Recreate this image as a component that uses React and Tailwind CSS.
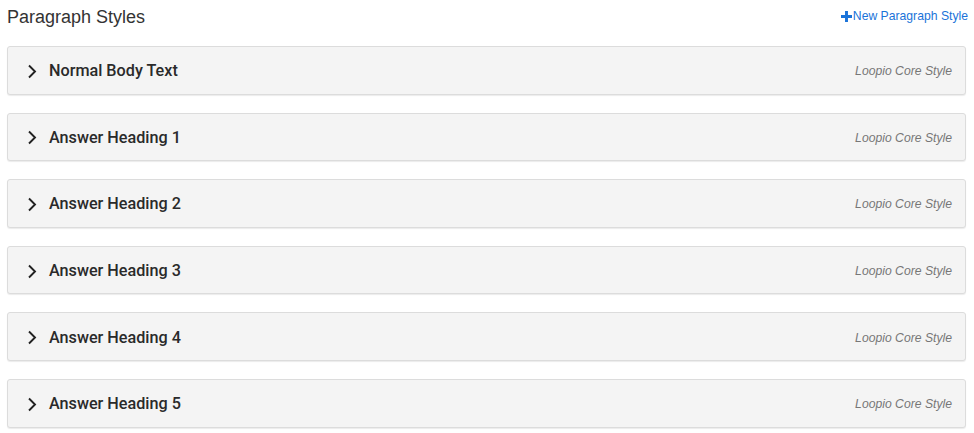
const styles = [
  "Normal Body Text",
  "Answer Heading 1",
  "Answer Heading 2",
  "Answer Heading 3",
  "Answer Heading 4",
  "Answer Heading 5",
];

export default function App() {
  return (
    <div className="w-[974px] h-[433px] bg-white px-[7px] font-['Liberation_Sans',Arial,sans-serif] text-[#333]">
      <div className="flex items-center justify-between h-[33px]">
        <h2 className="text-[18px] leading-none">Paragraph Styles</h2>
        <button className="flex items-center text-[12.2px] text-[#1a73d9] -mr-[1px]">
          <svg width="11" height="11" viewBox="0 0 12 12" className="mr-[1px]">
            <path d="M4.4 0h3.2v4.4H12v3.2H7.6V12H4.4V7.6H0V4.4h4.4z" fill="currentColor" />
          </svg>
          New Paragraph Style
        </button>
      </div>
      <div className="flex flex-col gap-[18px] mt-[13px] pr-[1px]">
        {styles.map((name) => (
          <div
            key={name}
            className="flex items-center justify-between h-[48.6px] rounded-[3px] border border-[#dcdcdc] bg-[#f4f4f4] shadow-[0_1px_1px_rgba(0,0,0,0.08)] pl-[19px] pr-[13px] pt-[2px]"
          >
            <div className="flex items-center gap-[11px]">
              <svg width="11" height="15" viewBox="0 0 11 15" fill="none">
                <path d="M2 1.5l6 6-6 6" stroke="#222" strokeWidth="1.9" />
              </svg>
              <span className="font-['Roboto',sans-serif] text-[16.2px] font-medium text-[#2a2a2a]">{name}</span>
            </div>
            <span className="text-[12.2px] italic text-[#777]">Loopio Core Style</span>
          </div>
        ))}
      </div>
    </div>
  );
}
